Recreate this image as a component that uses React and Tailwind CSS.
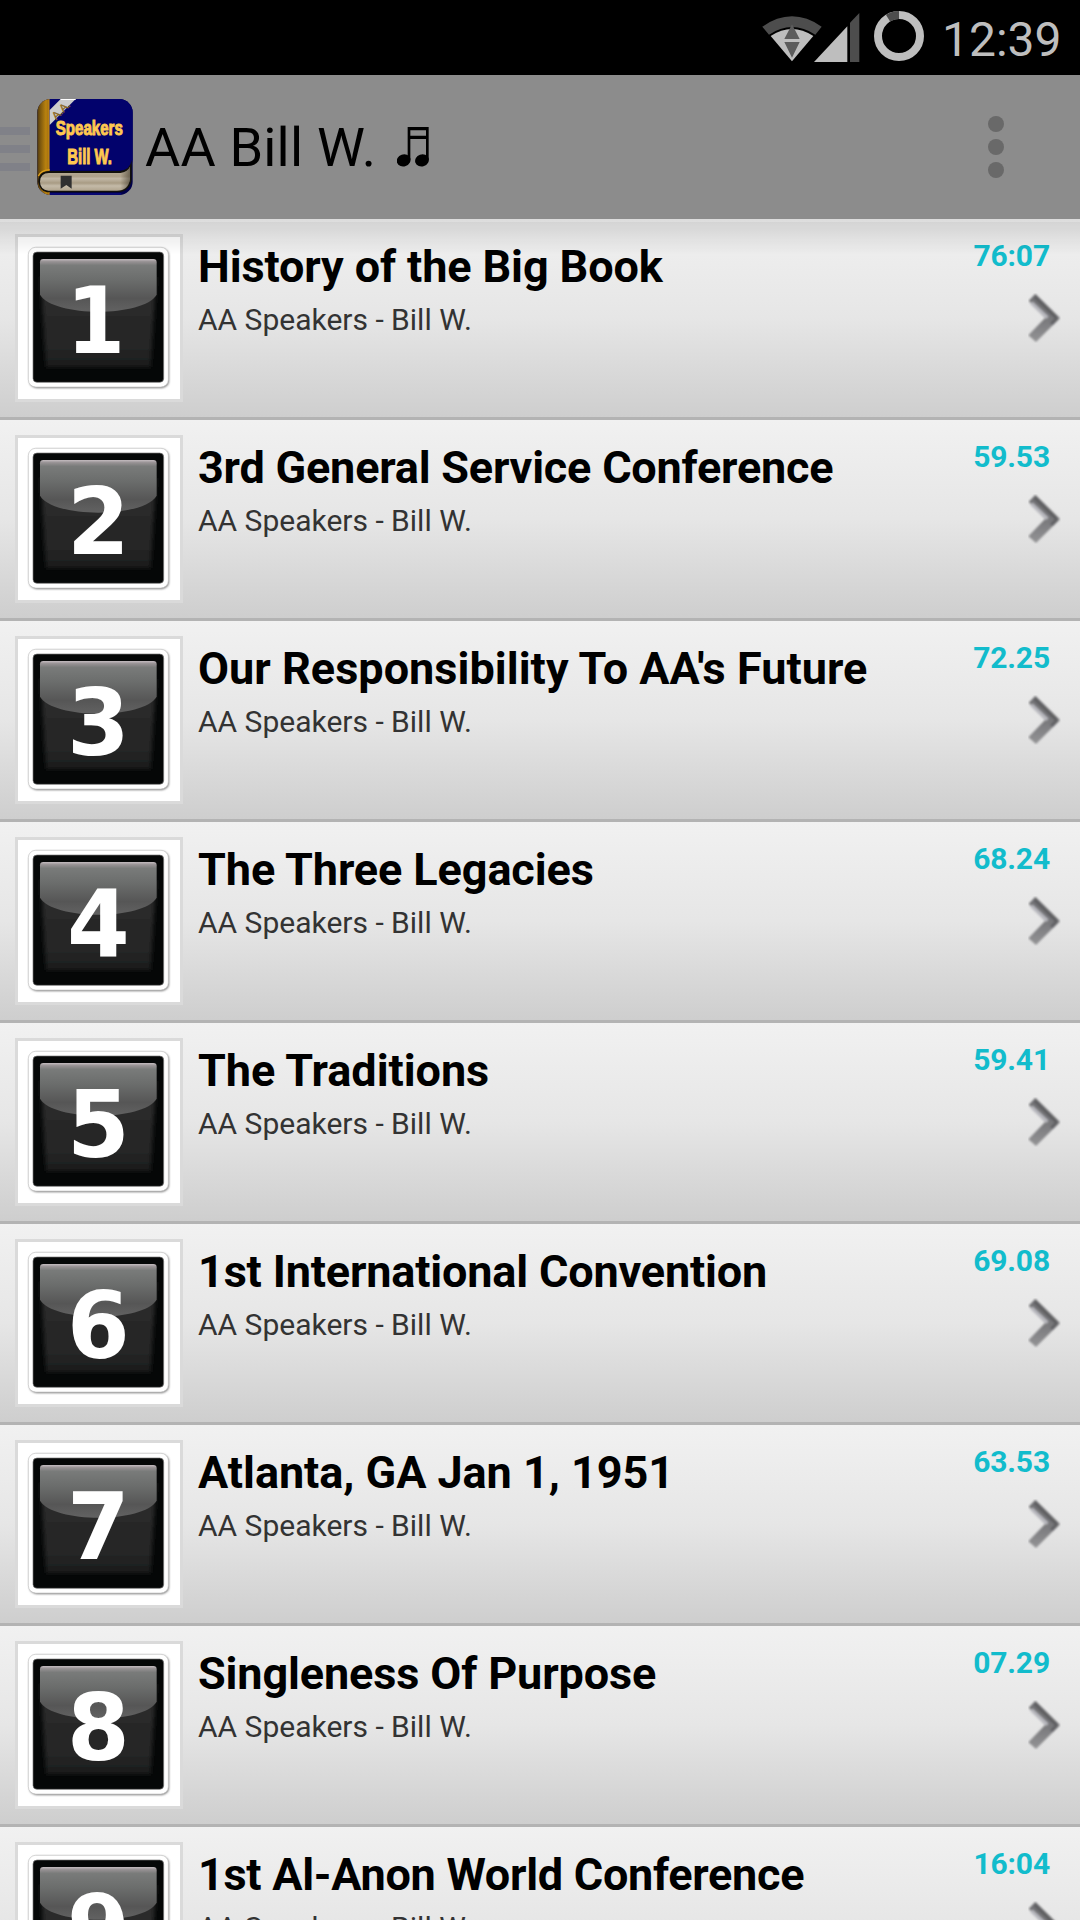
import React from "react";

const tracks = [
  ["1", "History of the Big Book", "76:07", "tracking-[-0.11px]"],
  ["2", "3rd General Service Conference", "59.53", "tracking-[-0.21px]"],
  ["3", "Our Responsibility To AA's Future", "72.25", "tracking-[0.03px]"],
  ["4", "The Three Legacies", "68.24", "tracking-[-0.1px]"],
  ["5", "The Traditions", "59.41", "tracking-[-0.04px]"],
  ["6", "1st International Convention", "69.08", "tracking-[-0.17px]"],
  ["7", "Atlanta, GA Jan 1, 1951", "63.53", "tracking-[-0.04px]"],
  ["8", "Singleness Of Purpose", "07.29", "tracking-[-0.13px]"],
  ["9", "1st Al-Anon World Conference", "16:04", "tracking-[-0.28px]"],
];

function WifiIcon() {
  return (
    <svg className="h-[48px] w-[60px]" viewBox="0 0 180 144">
      <path d="M1 38 Q90 -24 179 38 L160 62 Q90 16 21 62Z" fill="#4d4d4d" />
      <path d="M26 66 Q90 24 154 66 L90 142Z" fill="#bebebe" />
      <path d="M90 31 L113 75 H67Z M67 84 H113 L90 131Z" fill="#5c5c5c" />
    </svg>
  );
}

function SignalIcon() {
  return (
    <svg className="h-[49px] w-[46px]" viewBox="0 0 138 147">
      <path d="M0 147 L100 40 V147Z" fill="#bebebe" />
      <path d="M108 29 L136 0 V147 H108Z" fill="#4d4d4d" />
    </svg>
  );
}

function BatteryRing() {
  return (
    <svg className="h-[50px] w-[50px]" viewBox="0 0 150 150">
      <circle cx="75" cy="75" r="63" fill="none" stroke="#bebebe" strokeWidth="24" />
      <path d="M75 12 A63 63 0 0 0 42 21.500" fill="none" stroke="#4d4d4d" strokeWidth="24" />
    </svg>
  );
}

function BookIcon() {
  return (
    <svg className="h-[96px] w-[96px] overflow-visible" viewBox="112 87 288 288">
      <defs>
        <linearGradient id="spine" x1="0" x2="1" y1="0" y2="0">
          <stop offset="0" stopColor="#4a3510" />
          <stop offset="0.25" stopColor="#7a560e" />
          <stop offset="0.7" stopColor="#b9820f" />
          <stop offset="0.88" stopColor="#a8730e" />
          <stop offset="1" stopColor="#e8a820" />
        </linearGradient>
        <linearGradient id="pages" x1="0" x2="0" y1="0" y2="1">
          <stop offset="0" stopColor="#8c8068" />
          <stop offset="0.18" stopColor="#b9ae9a" />
          <stop offset="0.4" stopColor="#ada089" />
          <stop offset="0.5" stopColor="#c2b8a6" />
          <stop offset="0.68" stopColor="#a89b84" />
          <stop offset="0.8" stopColor="#c4baa8" />
          <stop offset="1" stopColor="#b0a48e" />
        </linearGradient>
        <linearGradient id="pageEdge" x1="0" x2="1" y1="0" y2="0">
          <stop offset="0" stopColor="#40382a" stopOpacity="0" />
          <stop offset="1" stopColor="#40382a" stopOpacity="0.6" />
        </linearGradient>
        <clipPath id="bookShape">
          <rect x="113" y="87" width="286" height="288" rx="40" />
        </clipPath>
      </defs>
      <g clipPath="url(#bookShape)">
        <rect x="112" y="87" width="288" height="288" fill="#00004a" />
        <rect x="112" y="87" width="38" height="288" fill="url(#spine)" />
        <path d="M150 87 H400 V268 Q396 302 358 302 H150Z" fill="#02026c" />
        <path d="M150 372 H365" stroke="#0a0a80" strokeWidth="5" />
        <path d="M116 345 Q112 302 150 303 H360 Q392 300 396 270 L396 330 Q390 366 350 367 H142 Q120 362 116 335Z" fill="#12100c" />
        <path d="M116 318 Q124 301 150 299" fill="none" stroke="#e0a01c" strokeWidth="4" />
        <path d="M148 309 H362 Q384 306 391 290 V326 Q386 362 352 362 H146 Q121 358 121 335 Q122 309 148 309Z" fill="url(#pages)" />
        <path d="M362 309 Q384 306 391 290 V326 Q386 362 362 362Z" fill="url(#pageEdge)" />
        <path d="M183 317 H216 V356 L200 345 L183 356Z" fill="#303030" />
        <path d="M183 87 H228 L150 165 V120Z" fill="#cccccc" />
        <path d="M183 87 H228" stroke="#ffffff" strokeWidth="6" />
      </g>
      <text x="183" y="132" transform="rotate(-45 183 120)" textAnchor="middle" fontFamily="Liberation Sans" fontSize="33" fill="#8a6418" stroke="#8a6418">A.A.</text>
      <text x="269" y="195" textAnchor="middle" textLength="201" lengthAdjust="spacingAndGlyphs" fontFamily="Liberation Sans" fontWeight="bold" fontSize="59" fill="#ffc850" stroke="#ffc850" strokeWidth="3">Speakers</text>
      <text x="270" y="281" textAnchor="middle" textLength="134" lengthAdjust="spacingAndGlyphs" fontFamily="Liberation Sans" fontWeight="bold" fontSize="64" fill="#ffc850" stroke="#ffc850" strokeWidth="3">Bill W.</text>
    </svg>
  );
}

function NoteIcon() {
  return (
    <svg className="h-[40px] w-[32px]" viewBox="0 0 96 120">
      <path d="M32 0 H95 V98 H87 V36 H40 V98 H32Z M40 10 V26 H87 V10Z" fill="#000" fillRule="evenodd" />
      <ellipse cx="20" cy="100" rx="21" ry="18" transform="rotate(-20 20 100)" />
      <ellipse cx="75" cy="100" rx="21" ry="18" transform="rotate(-20 75 100)" />
    </svg>
  );
}

function TileDefs() {
  return (
    <svg className="absolute h-0 w-0" aria-hidden="true">
      <defs>
        <linearGradient id="gloss" x1="0" x2="0" y1="0" y2="1">
          <stop offset="0" stopColor="#c4bcc0" />
          <stop offset="0.05" stopColor="#979294" />
          <stop offset="0.12" stopColor="#797b7a" />
          <stop offset="0.4" stopColor="#6b6d6c" />
          <stop offset="0.75" stopColor="#565656" />
          <stop offset="1" stopColor="#626262" />
        </linearGradient>
        <linearGradient id="glow" x1="0" x2="0" y1="0" y2="1">
          <stop offset="0" stopColor="#2b2b2b" />
          <stop offset="0.75" stopColor="#272727" />
          <stop offset="1" stopColor="#1b1c1c" />
        </linearGradient>
        <filter id="soft" x="-10%" y="-10%" width="120%" height="120%">
          <feGaussianBlur stdDeviation="7" />
        </filter>
        <filter id="lift" x="-10%" y="-10%" width="120%" height="120%">
          <feGaussianBlur stdDeviation="2.500" />
        </filter>
        <linearGradient id="chev" x1="0" x2="0" y1="0" y2="1">
          <stop offset="0" stopColor="#707073" />
          <stop offset="0.5" stopColor="#77777a" />
          <stop offset="1" stopColor="#949496" />
        </linearGradient>
        <filter id="chevSoft" x="-10%" y="-10%" width="120%" height="120%">
          <feGaussianBlur stdDeviation="2.500" />
        </filter>
      </defs>
    </svg>
  );
}

function NumberTile({ digit }) {
  return (
    <svg className="h-[162px] w-[162px]" viewBox="54 81 486 486">
      <rect x="88" y="115" width="419" height="419" rx="22" fill="#777" filter="url(#lift)" />
      <rect x="85" y="112" width="420" height="419" rx="22" fill="#fff" stroke="#c4c4c4" strokeWidth="2" />
      <rect x="99" y="126" width="392" height="391" rx="12" fill="#050707" stroke="#777" strokeWidth="2" />
      <path d="M122 200 H468 L452 472 H138Z" fill="url(#glow)" filter="url(#soft)" />
      <path d="M120 157 Q120 147 130 147 H460 Q470 147 470 157 V254 C430 322 160 322 120 254Z" fill="url(#gloss)" />
      <text
        x="0"
        y="428"
        transform={digit === "1" ? "translate(287 0) scale(0.91 1)" : "translate(295 0) scale(0.97 1)"}
        textAnchor="middle"
        fontFamily="DejaVu Sans"
        fontWeight="bold"
        fontSize="279"
        fill="#fff"
      >
        {digit}
      </text>
    </svg>
  );
}

function Chevron() {
  return (
    <svg className="mr-[19px] mt-[19px] h-[50px] w-[33px]" viewBox="264 609 99 150">
      <g filter="url(#chevSoft)">
        <path d="M266 632 L286 611 L360 684 L288 756 L265 736 L315 684Z" fill="url(#chev)" />
        <path d="M274 638 L322 683" fill="none" stroke="#b8b8be" strokeWidth="10" />
        <path d="M284 620 L350 684" fill="none" stroke="#5e5e61" strokeWidth="10" />
        <path d="M352 684 L334 702" fill="none" stroke="#626265" strokeWidth="10" />
      </g>
    </svg>
  );
}

function TrackRow({ track: [digit, title, time, tracking] }) {
  return (
    <li className="flex h-[201px] shrink-0 border-b-[3px] border-[#b3b3b3] bg-linear-to-b from-[#f1f1f1] via-[#e6e6e6] to-[#cecece] p-[15px] pr-0">
      <div className="h-[168px] w-[168px] shrink-0 border-[3px] border-[#dadada] bg-white">
        <NumberTile digit={digit} />
      </div>
      <div className="flex-1 pl-[15px] whitespace-nowrap">
        <h2 className={"mt-[6px] text-[45px] leading-[53px] font-bold text-black " + tracking}>{title}</h2>
        <p className="mt-[9px] text-[30px] leading-[36px] text-[#333333]">AA Speakers - Bill W.</p>
      </div>
      <div className="flex flex-col items-end">
        <span className="mt-[4px] mr-[30px] text-[30px] leading-[36px] font-bold tracking-[-0.15px] text-[#12bccc]">{time}</span>
        <Chevron />
      </div>
    </li>
  );
}

export default function App() {
  return (
    <div className="flex h-[1920px] w-[1080px] flex-col overflow-hidden bg-[#8c8c8c] font-['Roboto',sans-serif]">
      <TileDefs />
      <div className="flex h-[75px] shrink-0 items-start bg-black pl-[762px]">
        <div className="mt-[14px]"><WifiIcon /></div>
        <div className="mt-[13px] -ml-[8px]"><SignalIcon /></div>
        <div className="mt-[11px] ml-[14px]"><BatteryRing /></div>
        <span className="mt-[12px] ml-[18px] text-[48px] leading-[56px] text-[#bebebe]">12:39</span>
      </div>
      <header className="flex h-[144px] shrink-0 items-center bg-[#8c8c8c]">
        <div className="mt-[4px] flex w-[30px] flex-col gap-[10px]">
          <div className="h-[8px] bg-[#808188]" />
          <div className="h-[8px] bg-[#808188]" />
          <div className="h-[8px] bg-[#808188]" />
        </div>
        <div className="ml-[7px]"><BookIcon /></div>
        <div className="ml-[12px] flex flex-1 items-center">
          <h1 className="mt-[2px] w-[252px] text-[54px] leading-[64px] tracking-[0.2px] whitespace-nowrap text-black">
            AA Bill W.
          </h1>
          <NoteIcon />
        </div>
        <div className="mr-[76px] flex flex-col gap-[7px]">
          <div className="size-[16px] rounded-full bg-[#696969]" />
          <div className="size-[16px] rounded-full bg-[#696969]" />
          <div className="size-[16px] rounded-full bg-[#696969]" />
        </div>
      </header>
      <div className="relative flex-1 overflow-hidden">
        <ul className="flex flex-col">
          {tracks.map((t) => <TrackRow key={t[0]} track={t} />)}
        </ul>
        <div className="pointer-events-none absolute inset-x-0 top-0 h-[36px] border-t-[3px] border-black/8 bg-linear-to-b from-black/12 to-transparent" />
      </div>
    </div>
  );
}
